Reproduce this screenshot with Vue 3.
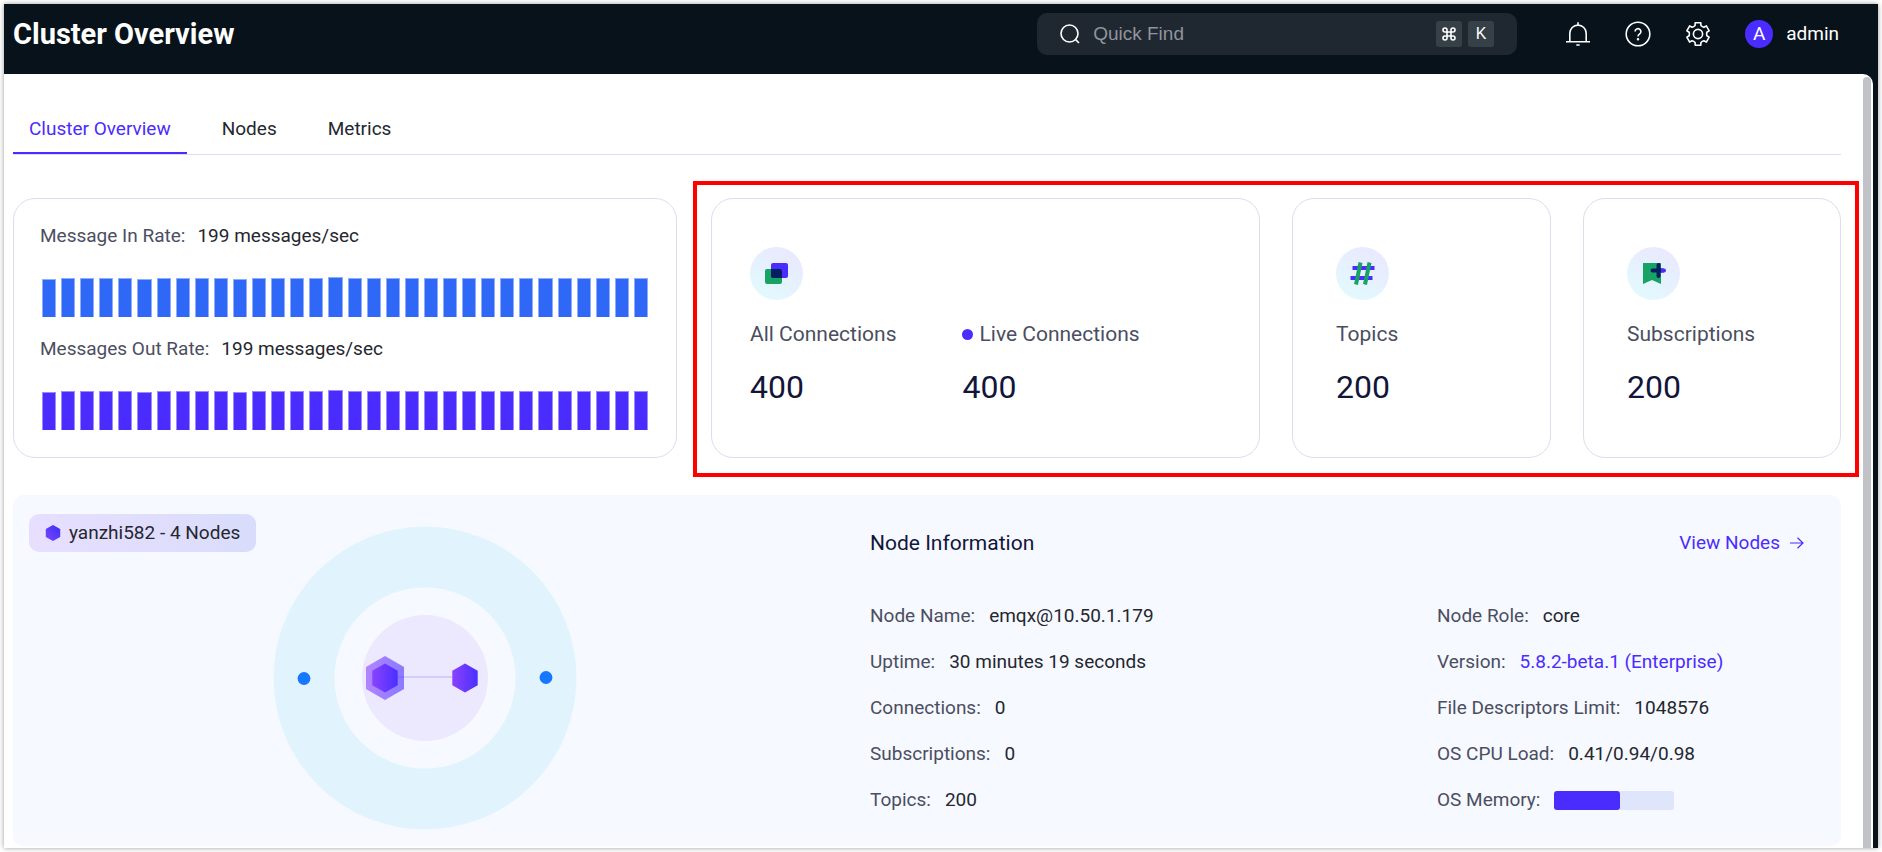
<script setup>
import { ref } from 'vue'

const query = ref('')
const tabs = ['Cluster Overview', 'Nodes', 'Metrics']
const activeTab = ref('Cluster Overview')

const barHeights = Array.from({ length: 32 }, (_, i) => {
  if (i === 0 || i === 5 || i === 10) return 38
  return i === 15 ? 40 : 39
})
const rates = [
  { label: 'Message In Rate:', value: '199 messages/sec', tone: 'blue' },
  { label: 'Messages Out Rate:', value: '199 messages/sec', tone: 'violet' },
]

const nodeInfo = [
  [
    { label: 'Node Name:', value: 'emqx@10.50.1.179' },
    { label: 'Uptime:', value: '30 minutes 19 seconds' },
    { label: 'Connections:', value: '0' },
    { label: 'Subscriptions:', value: '0' },
    { label: 'Topics:', value: '200' },
  ],
  [
    { label: 'Node Role:', value: 'core' },
    { label: 'Version:', value: '5.8.2-beta.1 (Enterprise)', link: true },
    { label: 'File Descriptors Limit:', value: '1048576' },
    { label: 'OS CPU Load:', value: '0.41/0.94/0.98' },
    { label: 'OS Memory:', percent: 55 },
  ],
]

// Outline of a six-toothed gear centred on 13,13.
function gearPath() {
  const point = (radius, degrees) => {
    const a = (degrees * Math.PI) / 180
    return `${(13 + radius * Math.cos(a)).toFixed(2)} ${(13 + radius * Math.sin(a)).toFixed(2)}`
  }
  let d = ''
  for (let k = 0; k < 6; k++) {
    const c = -90 + 60 * k
    d += `${k ? 'L' : 'M'}${point(9, c - 19)}L${point(11.6, c - 14)}L${point(11.6, c + 14)}L${point(9, c + 19)}`
    d += `Q${point(8.4, c + 30)} ${point(9, c + 41)}`
  }
  return d + 'Z'
}
const gear = gearPath()
</script>

<template>
  <div class="page">
    <div class="frame">
      <header class="topbar">
        <h1 class="title">Cluster Overview</h1>
        <div class="tools">
          <label class="search">
            <svg class="search-icon" viewBox="0 0 20 20" aria-hidden="true">
              <circle cx="9.5" cy="9.5" r="8.5" />
              <path d="M15.6 15.6L19 19" />
            </svg>
            <input v-model="query" type="text" placeholder="Quick Find" aria-label="Quick Find" />
            <kbd>
              <svg class="cmd" viewBox="0 0 14 14" aria-hidden="true">
                <path d="M5 5H9V9H5ZM5 5H3A2 2 0 1 1 5 3ZM9 5V3A2 2 0 1 1 11 5ZM9 9H11A2 2 0 1 1 9 11ZM5 9V11A2 2 0 1 1 3 9Z" />
              </svg>
            </kbd>
            <kbd>K</kbd>
          </label>
          <button class="icon-btn" type="button" aria-label="Alerts">
            <svg viewBox="0 0 26 26">
              <path d="M4.8 20.5V12.3a8.2 8.2 0 0 1 16.4 0V20.5M1 20.8H25M11.3 24h3.4M13 1.2V4" />
            </svg>
          </button>
          <button class="icon-btn" type="button" aria-label="Help">
            <svg viewBox="0 0 26 26">
              <circle cx="13" cy="13" r="11.8" />
              <path d="M10.1 10.6a2.9 2.9 0 1 1 4.6 2.3c-1.2.9-1.7 1.4-1.7 2.6" />
              <circle class="solid" cx="13" cy="18.3" r="0.5" />
            </svg>
          </button>
          <button class="icon-btn" type="button" aria-label="Settings">
            <svg viewBox="0 0 26 26">
              <path :d="gear" />
              <circle cx="13" cy="13" r="4.6" />
            </svg>
          </button>
          <button class="user" type="button">
            <span class="avatar">A</span>
            <span>admin</span>
          </button>
        </div>
      </header>

      <div class="body">
        <main class="content">
          <nav class="tabs" role="tablist">
            <button
              v-for="tab in tabs"
              :key="tab"
              type="button"
              role="tab"
              class="tab"
              :class="{ active: tab === activeTab }"
              :aria-selected="tab === activeTab"
              @click="activeTab = tab"
            >{{ tab }}</button>
          </nav>

          <section class="overview">
            <div class="card rates">
              <div v-for="rate in rates" :key="rate.label" class="rate">
                <p class="pair"><span class="label">{{ rate.label }}</span><span>{{ rate.value }}</span></p>
                <div class="bars" :class="rate.tone">
                  <span v-for="(h, i) in barHeights" :key="i" class="bar" :style="{ height: h + 'px' }"></span>
                </div>
              </div>
            </div>

            <div class="stats">
              <div class="card stat">
                <span class="badge-icon">
                  <svg viewBox="0 0 53 53" aria-hidden="true">
                    <rect x="15" y="22" width="17" height="15" rx="2" fill="#17a363" />
                    <rect x="21" y="16" width="17" height="15" rx="2" fill="#4a2cff" />
                    <path d="M21 22H30a2 2 0 0 1 2 2V31H23a2 2 0 0 1-2-2Z" fill="#06205f" />
                  </svg>
                </span>
                <div class="figures">
                  <div class="figure">
                    <p class="name">All Connections</p>
                    <p class="number">400</p>
                  </div>
                  <div class="figure">
                    <p class="name"><i class="live"></i>Live Connections</p>
                    <p class="number">400</p>
                  </div>
                </div>
              </div>
              <div class="card stat">
                <span class="badge-icon">
                  <svg viewBox="0 0 53 53" aria-hidden="true" fill="none" stroke-width="4">
                    <path d="M16.5 21H38.5M14.5 31H36.5" stroke="#4a2cff" />
                    <path d="M24.5 15.5L20 37.5M33.5 15.5L29 37.5" stroke="#17a363" />
                  </svg>
                </span>
                <div class="figure">
                  <p class="name">Topics</p>
                  <p class="number">200</p>
                </div>
              </div>
              <div class="card stat">
                <span class="badge-icon">
                  <svg viewBox="0 0 53 53" aria-hidden="true">
                    <path d="M16 16H34V37L25 33L16 37Z" fill="#17a363" />
                    <path d="M34 21.5H37a2 2 0 0 1 0 4H34Z" fill="#4a2cff" />
                    <path d="M31.5 18V29M25.5 23.5H34" stroke="#06205f" stroke-width="4" stroke-linecap="round" />
                    <rect x="34" y="21.5" width="3" height="4" fill="#4a2cff" />
                  </svg>
                </span>
                <div class="figure">
                  <p class="name">Subscriptions</p>
                  <p class="number">200</p>
                </div>
              </div>
              <div class="highlight"></div>
            </div>
          </section>

          <section class="panel">
            <div class="topology">
              <div class="cluster">
                <svg viewBox="0 0 16 16" aria-hidden="true">
                  <defs>
                    <linearGradient id="chipHex" x1="0" y1="1" x2="1" y2="0">
                      <stop offset="0" stop-color="#7a45ff" />
                      <stop offset="1" stop-color="#3a30f0" />
                    </linearGradient>
                  </defs>
                  <path d="M8 0L15.2 4V12L8 16L0.8 12V4Z" fill="url(#chipHex)" />
                </svg>
                <span>yanzhi582 - 4 Nodes</span>
              </div>
              <svg class="graph" viewBox="0 0 304 304" role="img" aria-label="Cluster nodes">
                <defs>
                  <linearGradient id="nodeHex" x1="0" y1="0" x2="1" y2="0">
                    <stop offset="0" stop-color="#8a42ff" />
                    <stop offset="1" stop-color="#4a30ff" />
                  </linearGradient>
                </defs>
                <circle cx="152" cy="152" r="121" fill="none" stroke="#e1f4fe" stroke-width="61" />
                <circle cx="152" cy="152" r="63" fill="#ece8fe" />
                <path d="M112 130L131 141V163L112 174L93 163V141Z" fill="url(#nodeHex)" opacity="0.6" />
                <path d="M112 137.5L124.7 144.8V159.2L112 166.5L99.3 159.2V144.8Z" fill="url(#nodeHex)" />
                <path d="M125 151H180" stroke="#4a2cff" stroke-opacity="0.15" stroke-width="2" />
                <path d="M192 137.5L204.7 144.8V159.2L192 166.5L179.3 159.2V144.8Z" fill="url(#nodeHex)" />
                <circle cx="31" cy="152.5" r="6.4" fill="#1677ff" />
                <circle cx="273" cy="151.5" r="6.4" fill="#1677ff" />
              </svg>
            </div>

            <div class="info">
              <div class="info-head">
                <h2>Node Information</h2>
                <a class="view" href="#nodes">View Nodes
                  <svg viewBox="0 0 14 12" aria-hidden="true"><path d="M0 6H13M7.5 0.7L13 6L7.5 11.3" /></svg>
                </a>
              </div>
              <div class="info-grid">
                <dl v-for="(column, c) in nodeInfo" :key="c">
                  <div v-for="item in column" :key="item.label" class="row">
                    <dt>{{ item.label }}</dt>
                    <dd v-if="item.percent" class="meter" role="img" :aria-label="item.percent + '%'">
                      <span class="fill" :style="{ width: item.percent + '%' }"></span>
                    </dd>
                    <dd v-else-if="item.link"><a href="#version">{{ item.value }}</a></dd>
                    <dd v-else>{{ item.value }}</dd>
                  </div>
                </dl>
              </div>
            </div>
          </section>
        </main>
        <div class="scrollbar"></div>
      </div>
    </div>
  </div>
</template>

<style>
body {
  margin: 0;
  background: #fff;
}
</style>

<style scoped>
* {
  box-sizing: border-box;
}
p,
h1,
h2,
dl,
dd {
  margin: 0;
}
button {
  font: inherit;
  color: inherit;
  background: none;
  border: 0;
  padding: 0;
  cursor: pointer;
}
a {
  color: #4a2cff;
  text-decoration: none;
}
.page {
  padding: 4px;
  font-family: Roboto, "Liberation Sans", sans-serif;
  font-size: 19px;
  line-height: 24px;
  color: #25272f;
}
.frame {
  background: #07121b;
  box-shadow: 0 0 5px rgba(0, 0, 0, 0.4);
}
.topbar {
  display: flex;
  align-items: flex-start;
  justify-content: space-between;
  height: 70px;
  padding: 9px 39px 0 9px;
  color: #fff;
}
.title {
  font-size: 29px;
  line-height: 42px;
  font-weight: 700;
}
.tools {
  display: flex;
  align-items: center;
}
.search {
  display: flex;
  align-items: center;
  width: 480px;
  height: 42px;
  margin-right: 48px;
  padding: 0 23px;
  border-radius: 10px;
  background: #1f2830;
}
.search-icon {
  width: 20px;
  height: 20px;
  fill: none;
  stroke: #fff;
  stroke-width: 1.6;
}
.search input {
  flex: 1;
  min-width: 0;
  margin-left: 13px;
  padding: 0;
  border: 0;
  outline: 0;
  background: none;
  color: #fff;
  font: 19px/24px "Liberation Sans", Arial, sans-serif;
}
.search input::placeholder {
  color: #90949d;
  opacity: 1;
}
kbd {
  display: flex;
  align-items: center;
  justify-content: center;
  width: 26px;
  height: 26px;
  margin-left: 6px;
  border-radius: 3px;
  background: #364047;
  font: 16px/24px "Liberation Sans", Arial, sans-serif;
}
.cmd {
  width: 14px;
  height: 14px;
  fill: none;
  stroke: #fff;
  stroke-width: 1.6;
}
.icon-btn {
  width: 26px;
  height: 26px;
  margin-right: 34px;
}
.icon-btn svg {
  display: block;
  fill: none;
  stroke: #fff;
  stroke-width: 1.6;
  stroke-linejoin: round;
}
.icon-btn .solid {
  fill: #fff;
}
.user {
  display: flex;
  align-items: center;
  gap: 13px;
}
.avatar {
  width: 28px;
  height: 28px;
  border-radius: 50%;
  background: #4a2cff;
  font-size: 19px;
  line-height: 28px;
  text-align: center;
}
.body {
  display: flex;
  margin-right: 5px;
  padding-right: 2px;
  border-top-right-radius: 10px;
  background: #fff;
}
.content {
  flex: 1;
  min-width: 0;
  padding: 33px 22px 2px 9px;
}
.scrollbar {
  width: 8px;
  margin-top: 3px;
  border-radius: 4px 4px 0 0;
  background: #c2c3c9;
}
.tabs {
  display: flex;
  gap: 19px;
  height: 48px;
  border-bottom: 1px solid #dcdcec;
}
.tab {
  height: 47px;
  padding: 0 16px 3px;
}
.tab.active {
  padding-bottom: 1px;
  border-bottom: 2px solid #4a2cff;
  color: #4a2cff;
}
.overview {
  display: grid;
  grid-template-columns: 664fr 1130fr;
  gap: 34px;
  margin-top: 43px;
}
.card {
  border: 1px solid #dcdeee;
  border-radius: 22px;
  background: #fff;
}
.rates {
  padding: 25px 28px 27px 26px;
}
.rate + .rate {
  margin-top: 20px;
}
.pair {
  display: flex;
  gap: 12px;
}
.label {
  color: #4b4e61;
}
.bars {
  display: flex;
  align-items: flex-end;
  gap: 5px;
  height: 40px;
  margin-top: 29px;
  padding-left: 2px;
}
.bar {
  flex: 1;
  border: 1px solid;
  border-bottom: 0;
}
.blue .bar {
  background: #2f67f6;
  border-color: #8eaefb;
}
.violet .bar {
  background: #4a2cff;
  border-color: #9c8bff;
}
.stats {
  position: relative;
  display: grid;
  grid-template-columns: 549fr 259fr 258fr;
  gap: 32px;
}
.highlight {
  position: absolute;
  inset: -17px -18px -19px;
  border: 4px solid #f00;
  pointer-events: none;
}
.stat {
  padding: 48px 0 50px 43px;
}
.stat:first-child {
  padding-left: 38px;
}
.badge-icon {
  display: block;
  width: 53px;
  height: 53px;
  border-radius: 50%;
  background: linear-gradient(30deg, #e2fafe 10%, #e9eafe 80%);
}
.badge-icon svg {
  display: block;
}
.figures {
  display: flex;
  gap: 66px;
}
.name {
  display: flex;
  align-items: center;
  gap: 6px;
  margin-top: 22px;
  font-size: 21px;
  color: #4b4e61;
}
.live {
  width: 11px;
  height: 11px;
  border-radius: 50%;
  background: #4a2cff;
}
.number {
  margin-top: 21px;
  font-size: 32px;
  line-height: 40px;
  color: #12153a;
}
.panel {
  display: grid;
  grid-template-columns: 857fr 971fr;
  margin-top: 37px;
  border-radius: 10px;
  background: #f6f9ff;
}
.topology {
  position: relative;
  padding: 31px 34px 16px 0;
}
.cluster {
  position: absolute;
  left: 16px;
  top: 19px;
  display: flex;
  align-items: center;
  gap: 8px;
  height: 38px;
  padding: 0 16px;
  border-radius: 10px;
  background: linear-gradient(75deg, #e8dfff, #d9dcfb);
}
.cluster svg {
  width: 16px;
  height: 16px;
}
.graph {
  display: block;
  width: 304px;
  height: 304px;
  margin: 0 auto;
}
.info {
  padding: 36px 37px 0 0;
}
.info-head {
  display: flex;
  align-items: center;
  justify-content: space-between;
}
h2 {
  font-size: 21px;
  line-height: 24px;
  font-weight: 400;
  color: #12153a;
}
.view {
  display: flex;
  align-items: center;
  gap: 10px;
}
.view svg {
  width: 14px;
  height: 12px;
  fill: none;
  stroke: #4a2cff;
  stroke-width: 1.2;
}
.info-grid {
  display: grid;
  grid-template-columns: 567fr 367fr;
  margin-top: 38px;
}
.row {
  display: flex;
  align-items: center;
  gap: 14px;
  height: 46px;
}
dt {
  color: #4b4e61;
}
.meter {
  width: 120px;
  height: 19px;
  border-radius: 3px;
  background: #dfe6fb;
}
.fill {
  display: block;
  height: 19px;
  border-radius: 3px;
  background: #4a2cff;
}
</style>
